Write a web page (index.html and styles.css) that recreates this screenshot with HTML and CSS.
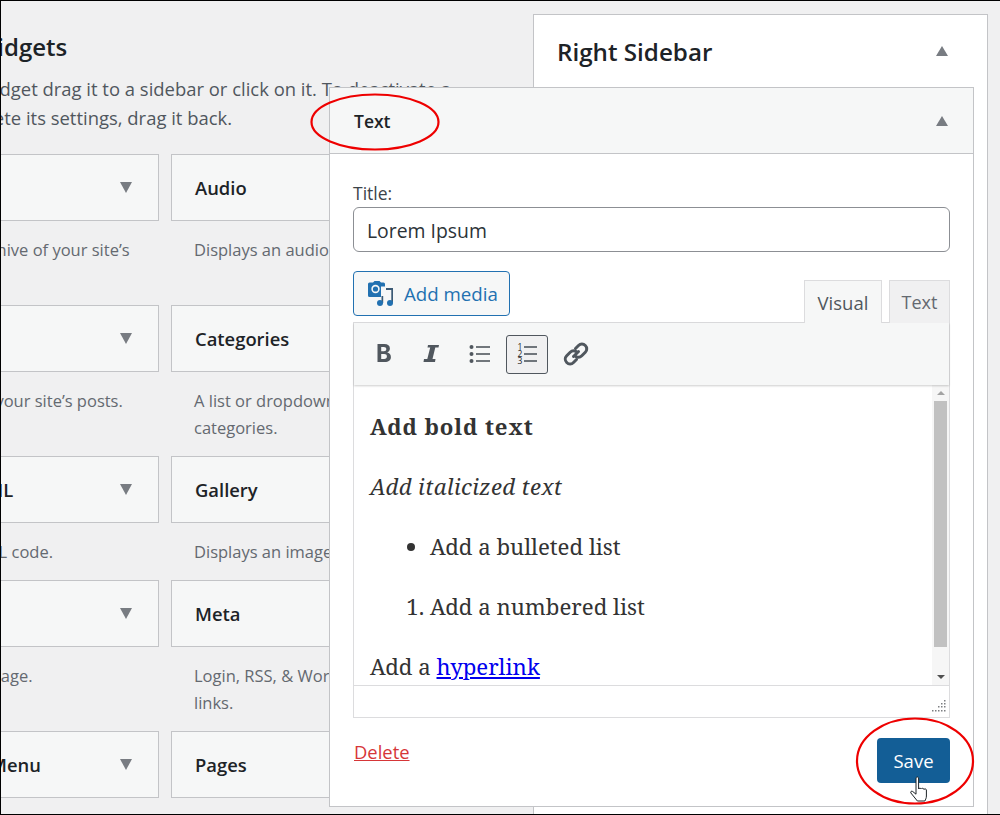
FILE: index.html
```html
<!DOCTYPE html>
<html lang="en">
<head>
<meta charset="utf-8">
<title>Widgets</title>
<link rel="stylesheet" href="styles.css">
</head>
<body>
<div class="screen">
  <main class="available">
    <h2 class="avail-title">Available Widgets</h2>
    <p class="avail-help">To activate a widget drag it to a sidebar or click on it. To deactivate a<br>widget and delete its settings, drag it back.</p>
    <div class="widget-grid">
      <div class="cell"><div class="wcard"><span>Archives</span><i class="tri down"></i></div><p class="wdesc">A monthly archive of your site’s<br>Posts.</p></div>
      <div class="cell"><div class="wcard"><span>Audio</span><i class="tri down"></i></div><p class="wdesc">Displays an audio player.</p></div>
      <div class="cell"><div class="wcard"><span>Calendar</span><i class="tri down"></i></div><p class="wdesc">A calendar of your site’s posts.</p></div>
      <div class="cell"><div class="wcard"><span>Categories</span><i class="tri down"></i></div><p class="wdesc">A list or dropdown of<br>categories.</p></div>
      <div class="cell short"><div class="wcard"><span>Custom HTML</span><i class="tri down"></i></div><p class="wdesc">Arbitrary HTML code.</p></div>
      <div class="cell short"><div class="wcard"><span>Gallery</span><i class="tri down"></i></div><p class="wdesc">Displays an image gallery.</p></div>
      <div class="cell"><div class="wcard"><span>Image</span><i class="tri down"></i></div><p class="wdesc">Displays an image.</p></div>
      <div class="cell"><div class="wcard"><span>Meta</span><i class="tri down"></i></div><p class="wdesc">Login, RSS, &amp; WordPress.org<br>links.</p></div>
      <div class="cell"><div class="wcard"><span>Navigation Menu</span><i class="tri down"></i></div></div>
      <div class="cell"><div class="wcard"><span>Pages</span><i class="tri down"></i></div></div>
    </div>
  </main>
  <aside class="sidebar">
    <div class="sidebar-head"><h2>Right Sidebar</h2><i class="tri up"></i></div>
  </aside>

  <section class="panel">
    <div class="panel-head"><span>Text</span><i class="tri up"></i></div>
    <div class="panel-body">
      <label class="field-label">Title:</label>
      <div class="title-input">Lorem Ipsum</div>
      <div class="media-row">
        <button class="media-btn">
          <svg class="media-ico" viewBox="0 0 27 25" width="27" height="25"><path fill="#2271b1" d="M2.500 1.500H6L7.500 0h5L14 1.500h2.500A1.500 1.500 0 0 1 18 3v2.500h-4V16H2.500A1.500 1.500 0 0 1 1 14.500V3a1.500 1.500 0 0 1 1.500-1.500z"/><circle cx="8.500" cy="8" r="4.200" fill="#f6f7f7"/><circle cx="8.500" cy="8" r="2.600" fill="#2271b1"/><path fill="#3c5a75" d="M14.500 15h1.700v7h-1.700zM19 7h7v15h-1.700V9H19z"/><circle cx="13" cy="22" r="3" fill="#2271b1"/><circle cx="23" cy="22" r="3" fill="#2271b1"/></svg>
          <span>Add media</span>
        </button>
        <div class="tabs"><span class="tab active">Visual</span><span class="tab plain">Text</span></div>
      </div>
      <div class="editor">
        <div class="toolbar">
          <span class="tool"><svg viewBox="0 0 20 20" width="20" height="20"><path fill="#50575e" d="M3.500 0h6.800c3.600 0 5.600 1.700 5.600 4.500 0 1.900-1 3.300-2.700 3.900v.1c2.300.5 3.700 2.100 3.700 4.500 0 3.200-2.300 5-6.200 5H3.500zM7.200 3v4.300h2.600c1.700 0 2.500-.8 2.500-2.200 0-1.400-.9-2.100-2.500-2.100zm0 7.100v4.900h3c1.700 0 2.700-.9 2.700-2.500s-1-2.400-2.800-2.400z"/></svg></span>
          <span class="tool"><svg viewBox="0 0 20 20" width="20" height="20"><path fill="#50575e" d="M6 1h11l-.5 2.500h-3.200L10.500 15h3L13 18H1.500L2 15h3.300L8.200 3.500H5.500z"/></svg></span>
          <span class="tool"><svg viewBox="0 0 22 20" width="22" height="20"><g fill="#50575e"><circle cx="2.500" cy="3" r="2"/><circle cx="2.500" cy="10" r="2"/><circle cx="2.500" cy="17" r="2"/><rect x="7" y="2.200" width="14" height="1.600"/><rect x="7" y="9.200" width="14" height="1.600"/><rect x="7" y="16.200" width="14" height="1.600"/></g></svg></span>
          <span class="tool on"><svg viewBox="0 0 22 22" width="22" height="22"><g fill="#50575e"><rect x="8" y="3.200" width="13" height="1.600"/><rect x="8" y="10.200" width="13" height="1.600"/><rect x="8" y="17.200" width="13" height="1.600"/></g><g fill="#1d2327" font-size="8.500" font-family="'Open Sans',sans-serif"><text x="1.500" y="7">1</text><text x="1.500" y="14">2</text><text x="1.500" y="21">3</text></g></svg></span>
          <span class="tool"><svg viewBox="0 0 26 26" width="26" height="26"><g fill="none" stroke="#50575e" stroke-width="3" stroke-linecap="round"><path d="M10.500 15.500l5-5"/><path d="M12.500 7.500l3-3a4.800 4.800 0 0 1 6.800 6.800l-3.500 3.500a4.800 4.800 0 0 1-6 .6"/><path d="M13.500 18.500l-3 3a4.800 4.800 0 0 1-6.800-6.800l3.500-3.500a4.800 4.800 0 0 1 6-.6"/></g></svg></span>
        </div>
        <div class="content-wrap">
          <div class="content">
            <p class="line"><strong>Add bold text</strong></p>
            <p class="line"><em>Add italicized text</em></p>
            <ul class="list"><li>Add a bulleted list</li></ul>
            <ol class="list"><li>Add a numbered list</li></ol>
            <p class="line">Add a <a href="#">hyperlink</a></p>
          </div>
          <div class="scroll">
            <i class="sc-up"></i>
            <div class="thumb"></div>
            <i class="sc-down"></i>
          </div>
        </div>
        <div class="statusbar">
          <svg class="grip" viewBox="0 0 15 14" width="15" height="14"><g fill="#7d7f82"><rect x="13" y="1" width="1.500" height="1.500"/><rect x="10" y="4" width="1.500" height="1.500"/><rect x="13" y="4" width="1.500" height="1.500"/><rect x="7" y="7" width="1.500" height="1.500"/><rect x="10" y="7" width="1.500" height="1.500"/><rect x="13" y="7" width="1.500" height="1.500"/><rect x="1" y="11" width="1.500" height="1.500"/><rect x="4" y="11" width="1.500" height="1.500"/><rect x="7" y="11" width="1.500" height="1.500"/><rect x="10" y="11" width="1.500" height="1.500"/><rect x="13" y="11" width="1.500" height="1.500"/></g></svg>
        </div>
      </div>
      <div class="panel-foot">
        <a class="delete" href="#">Delete</a>
        <button class="save">Save</button>
      </div>
    </div>
  </section>

  <svg class="marks" viewBox="0 0 1000 815" width="1000" height="815">
    <ellipse cx="375" cy="122" rx="63.500" ry="27.500" fill="none" stroke="#ee0000" stroke-width="2.200"/>
    <ellipse cx="915" cy="761" rx="58" ry="42.500" fill="none" stroke="#ee0000" stroke-width="2.200"/>
    <path d="M916 779c0-1.500.5-2 1.300-2s1.300.5 1.300 2v10c0-1 2.500-1 2.700 0 .2-1 2.500-1 2.700.5.200-1 2.300-.8 2.400.5v6c0 2.500-1 3.500-1.500 5h-7.500l-6.500-8c-.8-1.200.7-2.500 1.800-1.500l3.300 2.700z" fill="#fff" stroke="#1d2327" stroke-width="1"/>
  </svg>
</div>
</body>
</html>
```
FILE: styles.css
```css
* { box-sizing: border-box; }
html, body { margin: 0; padding: 0; height: 100%; }
body { width: 1000px; height: 815px; overflow: hidden; background: #f0f0f1; font-family: "Open Sans", "Noto Sans", sans-serif; color: #3c434a; }
.screen { position: relative; width: 1000px; height: 815px; overflow: hidden; background: #f0f0f1; border: 1px solid #000; border-width: 1px 0 1px 1px; display: flex; }
.available { width: 536px; flex: none; margin-left: -134px; padding-top: 30px; }
.avail-title { margin: 0 0 11px -4px; font-size: 24px; line-height: 32px; font-weight: 600; color: #1d2327; }
.avail-help { margin: 0 0 22px 1px; font-size: 18.450px; line-height: 29px; white-space: nowrap; color: #50575e; }
.widget-grid { display: grid; grid-template-columns: 292px 288px; column-gap: 12px; }
.cell { height: 151px; }
.cell.short { height: 124px; }
.wcard { height: 67px; display: flex; align-items: center; justify-content: space-between; padding: 0 26px 1px 23px; background: #f6f7f7; border: 1px solid #c3c4c7; font-size: 18.400px; font-weight: 600; color: #1d2327; }
.cell:nth-child(odd) .wcard { padding-left: 21px; }
.wdesc { margin: 15px 0 0; padding-left: 23px; font-size: 16.500px; line-height: 27px; color: #646970; white-space: nowrap; }
.tri { display: block; width: 0; height: 0; border-left: 6px solid transparent; border-right: 6px solid transparent; }
.tri.down { border-top: 11px solid #787c82; }
.tri.up { border-bottom: 10px solid #787c82; }
.sidebar { position: absolute; left: 532px; top: 13px; width: 455px; height: 815px; background: #fff; border: 1px solid #c3c4c7; }
.sidebar-head { height: 72px; display: flex; align-items: center; justify-content: space-between; padding: 0 39px 0 23px; }
.sidebar-head h2 { margin: 0; font-size: 24.200px; font-weight: 600; color: #1d2327; }
.panel { position: absolute; left: 328px; top: 86px; width: 645px; height: 720px; background: #fff; border: 1px solid #c3c4c7; }
.panel-head { height: 66px; display: flex; align-items: center; justify-content: space-between; padding: 0 25px 0 24px; background: #f6f7f7; border-bottom: 1px solid #c3c4c7; font-size: 17.500px; font-weight: 600; color: #1d2327; }
.panel-body { padding: 26px 23px 0; }
.field-label { display: block; font-size: 17.500px; line-height: 27px; color: #3c434a; }
.title-input { height: 45px; padding: 0 13px; line-height: 45px; background: #fff; border: 1px solid #8c8f94; border-radius: 6px; font-size: 19.400px; color: #2c3338; }
.media-row { margin-top: 19px; display: flex; justify-content: space-between; align-items: flex-end; height: 51px; }
.media-btn { align-self: flex-start; height: 45px; width: 157px; padding: 0 0 0 13px; display: flex; align-items: center; gap: 10px; background: #f6f7f7; border: 1px solid #2271b1; border-radius: 4px; font: 18.700px "Open Sans", sans-serif; color: #2271b1; }
.media-ico { flex: none; }
.tabs { display: flex; gap: 7px; margin-bottom: -1px; position: relative; z-index: 1; }
.tab { width: 78px; height: 43px; line-height: 43px; text-align: center; background: #f6f7f7; border: 1px solid #dcdcde; border-bottom: 0; font-size: 18.500px; color: #50575e; }
.tab.plain { width: 61px; background: #f0f0f1; color: #646970; font-size: 18px; }
.editor { border: 1px solid #dcdcde; background: #fff; height: 396px; display: flex; flex-direction: column; }
.toolbar { height: 62px; flex: none; display: flex; align-items: center; gap: 0; padding-left: 8px; background: #f6f7f7; box-shadow: 0 1px 2px rgba(0,0,0,.2); position: relative; }
.tool { width: 42px; height: 39px; margin-right: 6px; padding-left: 2px; display: flex; align-items: center; justify-content: center; border: 1px solid transparent; border-radius: 3px; }
.tool.on { padding-left: 0; background: #f0f0f1; border-color: #50575e; }
.content-wrap { flex: 1; display: flex; overflow: hidden; min-height: 0; }
.content { flex: 1; padding: 24px 16px 0; font-family: "Noto Serif", "DejaVu Serif", serif; font-size: 22.200px; line-height: 36px; color: #333; }
.content strong { letter-spacing: .9px; }
.content em { letter-spacing: .35px; }
.line { margin: 0 0 24px; }
.list { margin: 0 0 24px; padding-left: 60px; }
.scroll { width: 17px; flex: none; background: #f6f6f6; display: flex; flex-direction: column; align-items: center; }
.thumb { width: 13px; height: 246px; flex: none; background: #c1c1c1; }
.sc-up, .sc-down { display: block; width: 0; height: 0; border-left: 4px solid transparent; border-right: 4px solid transparent; margin: 6px 0; }
.sc-up { border-bottom: 4px solid #a3a3a3; }
.sc-down { margin-top: auto; border-top: 4px solid #505050; }
.statusbar { height: 32px; flex: none; border-top: 1px solid #dcdcde; display: flex; justify-content: flex-end; align-items: flex-end; padding: 0 3px 4px 0; }
.panel-foot { display: flex; justify-content: space-between; align-items: flex-start; margin-top: 20px; }
.delete { margin: 0 0 0 1px; font-size: 18.400px; line-height: 27px; color: #d63638; text-decoration: underline; }
.save { width: 73px; height: 45px; background: #135e96; border: 0; border-radius: 4px; color: #fff; font: 18.500px "Open Sans", sans-serif; }
.content a { color: #0000ee; }
.marks { position: absolute; left: -1px; top: -1px; pointer-events: none; }
```
